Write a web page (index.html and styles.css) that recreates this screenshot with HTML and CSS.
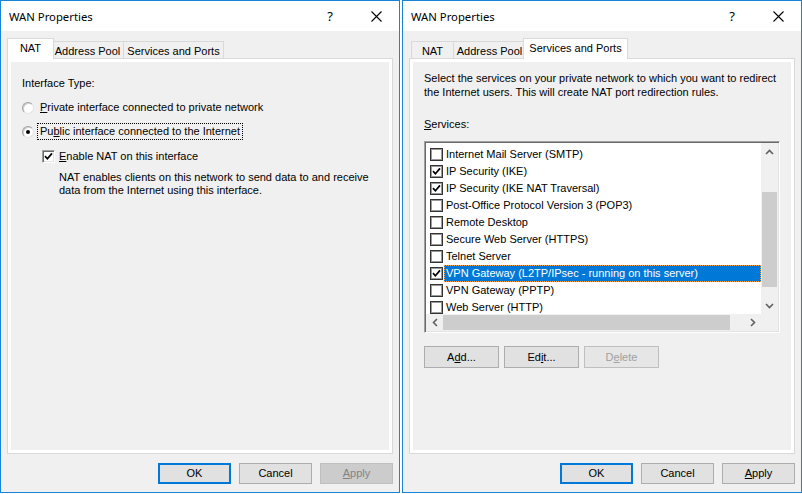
FILE: index.html
```html
<!DOCTYPE html>
<html>
<head>
<meta charset="utf-8">
<link rel="stylesheet" href="styles.css">
</head>
<body>
<div class="screen">
  <div class="dlg">
    <div class="titlebar">
      <span class="title">WAN Properties</span>
      <span class="tbtn help">?</span>
      <span class="tbtn close"><svg width="11" height="11" viewBox="0 0 11 11"><path d="M0.5 0.5 L10.5 10.5 M10.5 0.5 L0.5 10.5" stroke="#000" stroke-width="1.1" fill="none"/></svg></span>
    </div>
    <div class="body">
      <div class="tabs">
        <div class="tab sel t-nat">NAT</div>
        <div class="tab t-pool">Address Pool</div>
        <div class="tab t-svc">Services and Ports</div>
      </div>
      <div class="panel">
        <div class="page nat">
          <div class="line">Interface Type:</div>
          <div class="opt r1"><span class="radio"></span><span class="lbl"><u>P</u>rivate interface connected to private network</span></div>
          <div class="opt r2"><span class="radio on"><span class="dot"></span></span><span class="lbl focus">Pu<u>b</u>lic interface connected to the Internet</span></div>
          <div class="opt c1"><span class="cbox3d"><svg width="9" height="9" viewBox="0 0 9 9"><path d="M1 4.2 L3.4 6.8 L8 1.4" stroke="#000" stroke-width="1.7" fill="none"/></svg></span><span class="lbl"><u>E</u>nable NAT on this interface</span></div>
          <div class="desc">NAT enables clients on this network to send data to and receive<br>data from the Internet using this interface.</div>
        </div>
      </div>
      <div class="btns">
        <button class="btn def">OK</button>
        <button class="btn">Cancel</button>
        <button class="btn dis"><u>A</u>pply</button>
      </div>
    </div>
  </div>

  <div class="dlg">
    <div class="titlebar">
      <span class="title">WAN Properties</span>
      <span class="tbtn help">?</span>
      <span class="tbtn close"><svg width="11" height="11" viewBox="0 0 11 11"><path d="M0.5 0.5 L10.5 10.5 M10.5 0.5 L0.5 10.5" stroke="#000" stroke-width="1.1" fill="none"/></svg></span>
    </div>
    <div class="body">
      <div class="tabs">
        <div class="tab t-nat">NAT</div>
        <div class="tab t-pool">Address Pool</div>
        <div class="tab sel t-svc">Services and Ports</div>
      </div>
      <div class="panel">
        <div class="page svc">
          <div class="sdesc">Select the services on your private network to which you want to redirect<br>the Internet users. This will create NAT port redirection rules.</div>
          <div class="slabel"><u>S</u>ervices:</div>
          <div class="list">
            <div class="rows">
              <div class="row"><span class="cb"></span><span class="txt">Internet Mail Server (SMTP)</span></div>
              <div class="row"><span class="cb"><svg width="9" height="9" viewBox="0 0 9 9"><path d="M1 4.2 L3.4 6.8 L8 1.4" stroke="#000" stroke-width="1.7" fill="none"/></svg></span><span class="txt">IP Security (IKE)</span></div>
              <div class="row"><span class="cb"><svg width="9" height="9" viewBox="0 0 9 9"><path d="M1 4.2 L3.4 6.8 L8 1.4" stroke="#000" stroke-width="1.7" fill="none"/></svg></span><span class="txt">IP Security (IKE NAT Traversal)</span></div>
              <div class="row"><span class="cb"></span><span class="txt">Post-Office Protocol Version 3 (POP3)</span></div>
              <div class="row"><span class="cb"></span><span class="txt">Remote Desktop</span></div>
              <div class="row"><span class="cb"></span><span class="txt">Secure Web Server (HTTPS)</span></div>
              <div class="row"><span class="cb"></span><span class="txt">Telnet Server</span></div>
              <div class="row selrow"><span class="cb"><svg width="9" height="9" viewBox="0 0 9 9"><path d="M1 4.2 L3.4 6.8 L8 1.4" stroke="#000" stroke-width="1.7" fill="none"/></svg></span><span class="txt">VPN Gateway (L2TP/IPsec - running on this server)</span></div>
              <div class="row"><span class="cb"></span><span class="txt">VPN Gateway (PPTP)</span></div>
              <div class="row"><span class="cb"></span><span class="txt">Web Server (HTTP)</span></div>
            </div>
            <div class="vscroll">
              <span class="sbtn"><svg width="9" height="6" viewBox="0 0 9 6"><path d="M1 5 L4.5 1.5 L8 5" stroke="#606060" stroke-width="1.6" fill="none"/></svg></span>
              <span class="vtrack"><span class="vthumb"></span></span>
              <span class="sbtn"><svg width="9" height="6" viewBox="0 0 9 6"><path d="M1 1 L4.5 4.5 L8 1" stroke="#606060" stroke-width="1.6" fill="none"/></svg></span>
            </div>
            <div class="hscroll">
              <span class="sbtn"><svg width="6" height="9" viewBox="0 0 6 9"><path d="M5 1 L1.5 4.5 L5 8" stroke="#606060" stroke-width="1.6" fill="none"/></svg></span>
              <span class="htrack"><span class="hthumb"></span></span>
              <span class="sbtn"><svg width="6" height="9" viewBox="0 0 6 9"><path d="M1 1 L4.5 4.5 L1 8" stroke="#606060" stroke-width="1.6" fill="none"/></svg></span>
            </div>
            <div class="corner"></div>
          </div>
          <div class="lbtns">
            <button class="btn wide">A<u>d</u>d...</button>
            <button class="btn wide">Ed<u>i</u>t...</button>
            <button class="btn wide dis2">D<u>e</u>lete</button>
          </div>
        </div>
      </div>
      <div class="btns">
        <button class="btn def">OK</button>
        <button class="btn">Cancel</button>
        <button class="btn"><u>A</u>pply</button>
      </div>
    </div>
  </div>
</div>
</body>
</html>
```
FILE: styles.css
```css
* { box-sizing: border-box; }
html, body { margin: 0; padding: 0; background: #fff; }
body {
  width: 802px;
  height: 494px;
  overflow: hidden;
  font-family: "Liberation Sans", Arial, sans-serif;
  font-size: 11px;
  color: #000;
}
u { text-decoration: underline; text-underline-offset: 1px; }

.screen { display: flex; gap: 2px; }

.dlg {
  width: 400px;
  height: 493px;
  border: 1px solid #1883d7;
  background: #f0f0f0;
  display: flex;
  flex-direction: column;
}

.titlebar {
  height: 30px;
  background: #fff;
  display: flex;
  align-items: center;
  flex: none;
}
.title {
  margin-left: 8px;
  font-family: "Noto Sans", "Open Sans", sans-serif;
  font-size: 11.3px;
  padding-top: 1px;
}
.tbtn {
  width: 46px;
  height: 30px;
  display: flex;
  align-items: center;
  justify-content: center;
}
.help {
  margin-left: auto;
  font-family: "Noto Sans", sans-serif;
  font-size: 13px;
}

.body {
  flex: 1;
  display: flex;
  flex-direction: column;
  padding-top: 7px;
}

.tabs {
  display: flex;
  align-items: flex-end;
  height: 20px;
  margin-left: 8px;
  position: relative;
  z-index: 1;
}
.tab {
  height: 17px;
  border: 1px solid #d9d9d9;
  border-bottom: none;
  background: #f0f0f0;
  display: flex;
  align-items: center;
  justify-content: center;
  padding-top: 1px;
  margin-right: -1px;
}
.t-nat { width: 43px; }
.t-pool { width: 73px; }
.t-svc { width: 101px; }
.tab.sel {
  height: 21px;
  background: #fff;
  margin-left: -2px;
  margin-right: -3px;
  margin-bottom: -1px;
  padding-top: 0;
  padding-bottom: 3px;
  position: relative;
  z-index: 2;
}
.tab.sel.t-nat { width: 47px; }
.tab.sel.t-svc { width: 105px; }

.panel {
  margin-left: 6px;
  width: 386px;
  height: 396px;
  border: 1px solid #d9d9d9;
  background: #fff;
  padding: 3px;
  flex: none;
}
.page {
  width: 100%;
  height: 100%;
  background: #f0f0f0;
}

.line, .opt, .desc, .sdesc, .slabel { line-height: 13px; }

.nat { padding: 15px 0 0 11px; }
.opt { display: flex; align-items: center; height: 13px; }
.r1 { margin-top: 11px; }
.r2 { margin-top: 11px; }
.c1 { margin-top: 12px; margin-left: 20px; }
.radio {
  width: 12px;
  height: 12px;
  border-radius: 50%;
  border: 1px solid;
  border-color: #a0a0a0 #e3e3e3 #e3e3e3 #a0a0a0;
  background: #fff;
  box-shadow: inset 1px 1px 0 #d0d0d0;
  display: flex;
  align-items: center;
  justify-content: center;
  margin-right: 6px;
  flex: none;
}
.dot { width: 4px; height: 4px; border-radius: 50%; background: #000; }
.lbl.focus {
  outline: 1px dotted #000;
  outline-offset: 1px;
  padding: 0 1px;
  margin-left: -1px;
}
.cbox3d {
  width: 13px;
  height: 13px;
  border: 1px solid;
  border-color: #a0a0a0 #fff #fff #a0a0a0;
  box-shadow: inset 1px 1px 0 #696969, inset -1px -1px 0 #e3e3e3;
  background: #fff;
  display: flex;
  align-items: center;
  justify-content: center;
  margin-right: 4px;
  flex: none;
}
.desc { margin-top: 8px; margin-left: 37px; }

.svc { padding: 10px 0 0 11px; }
.sdesc { line-height: 13.5px; }
.slabel { margin-top: 19px; }
.list {
  margin-top: 10px;
  width: 356px;
  height: 192px;
  border: 1px solid;
  border-color: #a0a0a0 #fff #fff #a0a0a0;
  box-shadow: inset 1px 1px 0 #696969, inset -1px -1px 0 #e3e3e3;
  padding: 1px;
  background: #fff;
  display: grid;
  grid-template-columns: 1fr 17px;
  grid-template-rows: 1fr 17px;
}
.rows {
  overflow: hidden;
  padding-top: 3px;
  background: #fff;
}
.row {
  height: 17px;
  display: flex;
  align-items: center;
  padding-left: 4px;
  white-space: nowrap;
}
.cb {
  width: 13px;
  height: 13px;
  border: 1px solid #333;
  box-shadow: inset 0 0 0 1px #9a9a9a;
  background: #fff;
  display: flex;
  align-items: center;
  justify-content: center;
  flex: none;
}
.txt {
  flex: 1;
  height: 17px;
  line-height: 17px;
  padding-left: 2px;
  margin-left: 1px;
}
.selrow .txt {
  background: #0078d7;
  color: #fff;
  outline: 1px dotted #f7a04a;
  outline-offset: -1px;
}

.vscroll {
  background: #f0f0f0;
  display: flex;
  flex-direction: column;
}
.sbtn {
  width: 17px;
  height: 17px;
  display: flex;
  align-items: center;
  justify-content: center;
  flex: none;
}
.vtrack { flex: 1; padding-top: 32px; }
.vthumb { display: block; margin: 0 1px; height: 95px; background: #cdcdcd; }
.hscroll {
  background: #f0f0f0;
  display: flex;
}
.htrack { flex: 1; display: flex; align-items: center; }
.hthumb { display: block; width: 287px; height: 15px; background: #cdcdcd; }
.corner { background: #f0f0f0; }

.lbtns {
  margin-top: 13px;
  display: flex;
  gap: 5px;
}

.btn {
  width: 73px;
  height: 21px;
  border: 1px solid #adadad;
  background: #e1e1e1;
  font-family: "Liberation Sans", Arial, sans-serif;
  font-size: 11px;
  color: #000;
  padding: 0;
  line-height: 19px;
}
.btn.wide { width: 75px; height: 22px; }
.btn.def { border: 2px solid #0078d7; line-height: 17px; }
.btn.dis { background: #cccccc; border-color: #bfbfbf; color: #838383; }
.btn.dis2 { border-color: #bfbfbf; color: #a0a0a0; background: #e6e6e6; }

.btns {
  margin-top: 9px;
  display: flex;
  justify-content: flex-end;
  gap: 8px;
  padding-right: 6px;
}
```
